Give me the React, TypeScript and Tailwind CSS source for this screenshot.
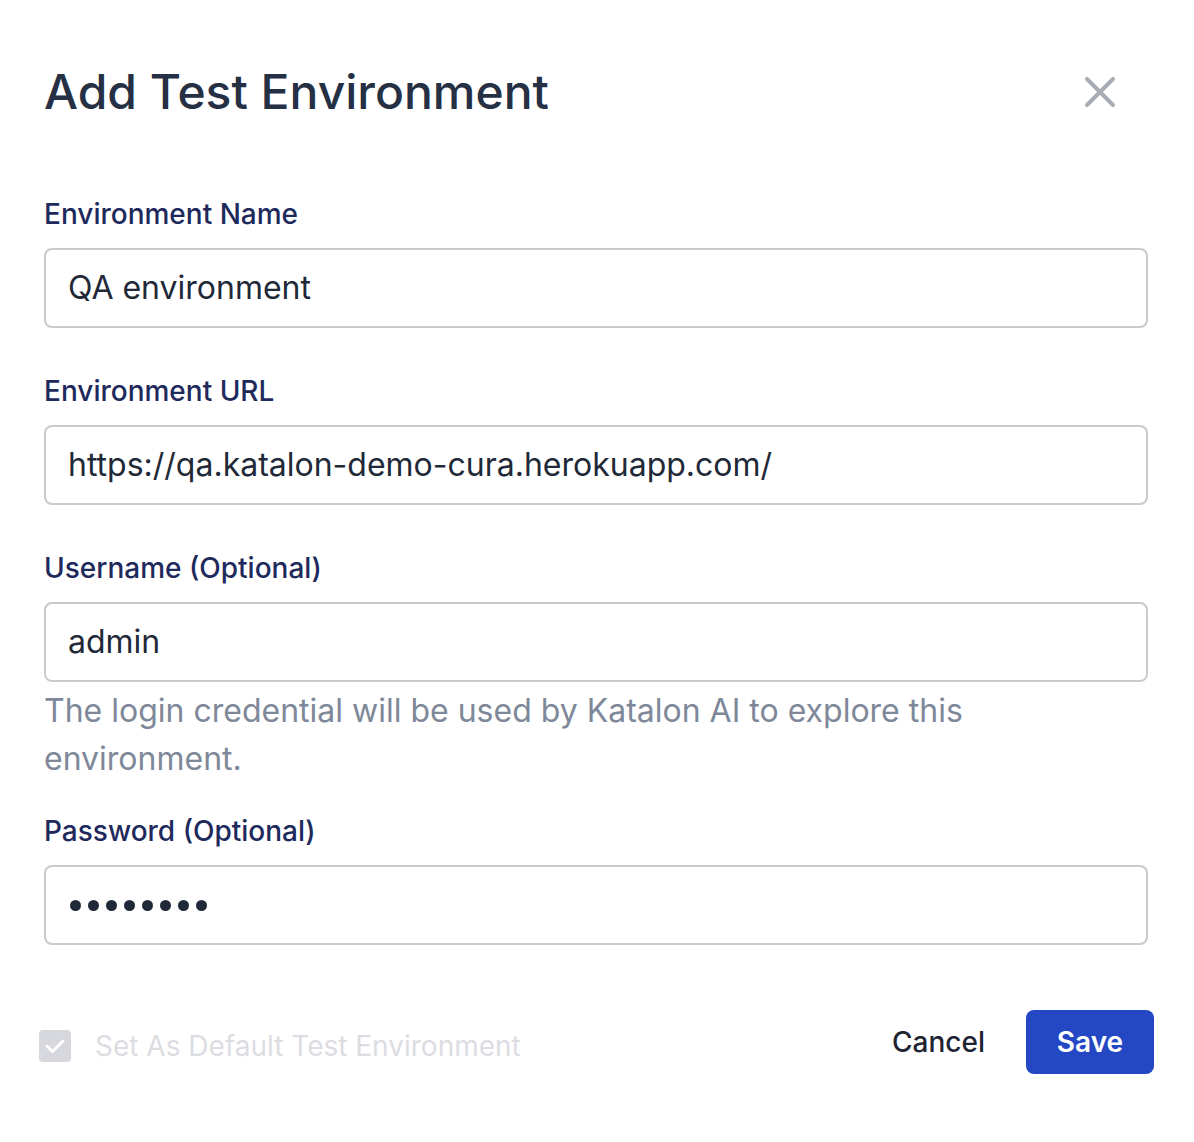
import React from 'react';

const FIELDS = [
    { label: 'Environment Name', value: 'QA environment' },
    { label: 'Environment URL', value: 'https://qa.katalon-demo-cura.herokuapp.com/' },
    {
        label: 'Username (Optional)',
        value: 'admin',
        help: 'The login credential will be used by Katalon AI to explore this environment.',
    },
    { label: 'Password (Optional)', value: '', secret: 8 },
];

function CloseIcon() {
    return (
        <svg width="30" height="30" viewBox="0 0 30 30" fill="none" stroke="#a9acb5" strokeWidth="4" strokeLinecap="round">
            <path d="M2 2 L28 28 M28 2 L2 28" />
        </svg>
    );
}

function Field({ label, value, help, secret }: { label: string; value: string; help?: string; secret?: number }) {
    return (
        <div className="flex flex-col">
            <label className="text-[28px] leading-[40px] font-medium text-[#1e2a5c] mb-[14px]">{label}</label>
            <div className="h-[80px] border-2 border-[#c9cacd] rounded-[8px] px-[22px] flex items-center text-[32px] text-[#1f2937]">
                {secret ? (
                    <div className="flex gap-[7px] pl-[2px]">
                        {Array.from({ length: secret }).map((_, i) => (
                            <span key={i} className="w-[11px] h-[11px] rounded-full bg-[#1f2937]" />
                        ))}
                    </div>
                ) : (
                    value
                )}
            </div>
            {help && <p className="mt-[5px] -mb-[15px] max-w-[960px] text-[32px] leading-[48px] text-[#7e8899]">{help}</p>}
        </div>
    );
}

export default function App() {
    return (
        <div className="w-[1194px] h-[1142px] bg-white font-['Inter',sans-serif] pl-[44px] pr-[46px] pt-[60px]">
            <div className="h-[64px] flex items-center justify-between">
                <h1 className="text-[48px] leading-[64px] font-medium text-[#253044]">Add Test Environment</h1>
                <div className="mr-[33px]">
                    <CloseIcon />
                </div>
            </div>

            <div className="mt-[70px] flex flex-col gap-[43px]">
                {FIELDS.map((f) => (
                    <Field key={f.label} {...f} />
                ))}
            </div>

            <div className="mt-[65px] -ml-[5px] -mr-[6px] flex items-center justify-between">
                <div className="flex items-center gap-[24px] mt-[8px]">
                    <span className="w-[32px] h-[32px] rounded-[4px] bg-[#d6d8de] flex items-center justify-center">
                        <svg width="20" height="16" viewBox="0 0 20 16" fill="none" stroke="white" strokeWidth="3" strokeLinecap="round" strokeLinejoin="round">
                            <path d="M2 8 L7.5 13.5 L18 3" />
                        </svg>
                    </span>
                    <span className="text-[28px] text-[#dcdde2]">Set As Default Test Environment</span>
                </div>
                <div className="flex items-center gap-[41px]">
                    <span className="text-[28px] font-medium text-[#1f2433]">Cancel</span>
                    <button className="w-[128px] h-[64px] rounded-[8px] bg-[#2447c4] text-white text-[28px] font-semibold">Save</button>
                </div>
            </div>
        </div>
    );
}
